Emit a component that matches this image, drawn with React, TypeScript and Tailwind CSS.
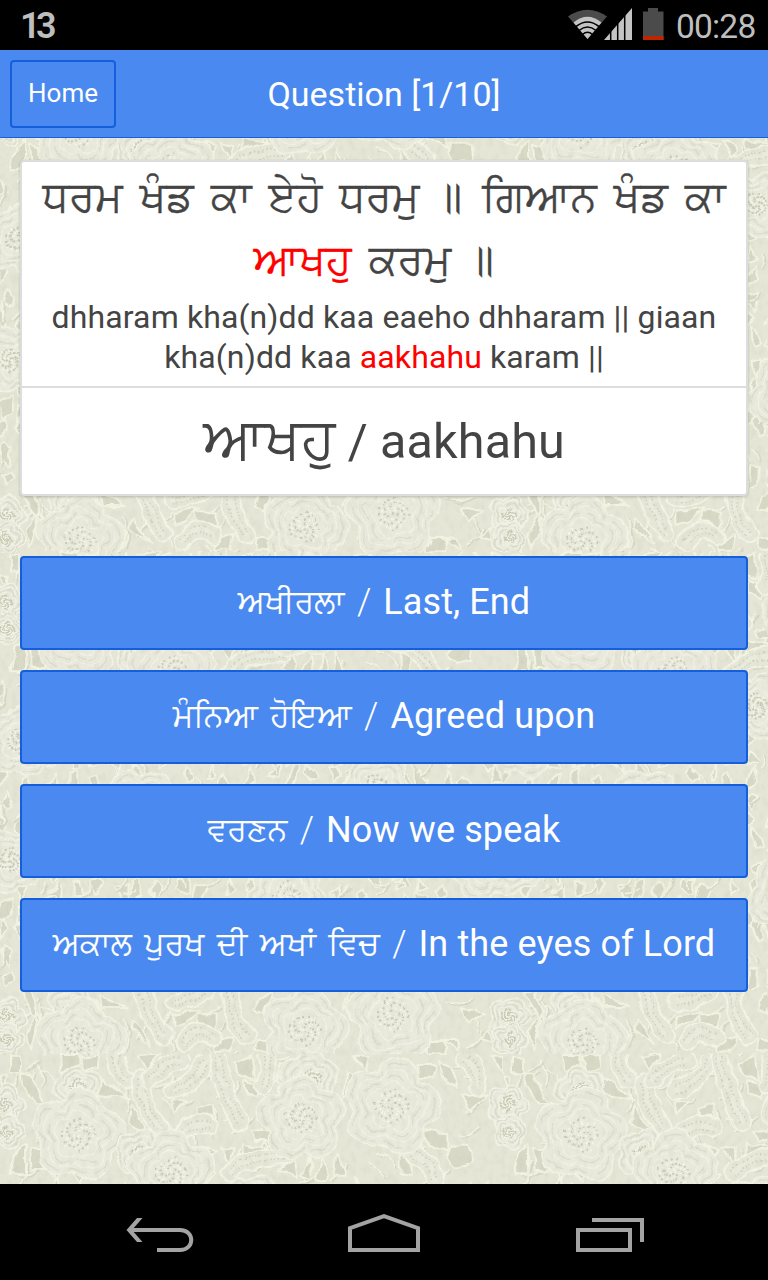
import type { ReactNode } from 'react';

const TILE_W = 503;
const TILE_H = 502;

function random(seed: number) {
  let s = seed;
  return () => {
    s = (s * 16807) % 2147483647;
    return s / 2147483647;
  };
}

function petalPath(r: number, turn: number) {
  let d = '';
  for (let i = 0; i <= 60; i++) {
    const a = (i / 60) * Math.PI * 2;
    const k = r * (0.78 + 0.24 * Math.abs(Math.cos(2.5 * a + turn)));
    d += `${i ? 'L' : 'M'}${(Math.cos(a) * k).toFixed(1)} ${(Math.sin(a) * k).toFixed(1)}`;
  }
  return d + 'Z';
}

function Flower({ x, y, r = 140, turn = 0 }: { x: number; y: number; r?: number; turn?: number }) {
  const dots: ReactNode[] = [];
  for (let i = 0; i < 60; i++) {
    const a = i * 2.4;
    const k = Math.sqrt(i / 60) * r * 0.36;
    dots.push(<circle key={i} cx={Math.cos(a) * k} cy={Math.sin(a) * k} r="3.4" fill={i % 2 ? '#c9cab3' : '#f4f5e8'} />);
  }
  return (
    <g transform={`translate(${x} ${y})`}>
      <path d={petalPath(r, turn)} fill="#e9eadc" stroke="#f1f3e4" strokeWidth="5" />
      {[0.88, 0.76, 0.64, 0.52].map((k, i) => (
        <path
          key={k}
          d={petalPath(r * k, turn + i * 0.12)}
          fill="none"
          stroke={i % 2 ? '#f1f2e6' : '#dbddca'}
          strokeWidth="4"
          strokeDasharray={i % 2 ? undefined : '60 26'}
        />
      ))}
      {dots}
    </g>
  );
}

function Leaf({ d }: { d: string }) {
  return (
    <g fill="none" strokeLinecap="round">
      <path d={d} stroke="#f2f4e5" strokeWidth="58" />
      <path d={d} stroke="#e6e7d7" strokeWidth="46" />
      <path d={d} stroke="#cfd1bb" strokeWidth="24" strokeDasharray="4 8" strokeLinecap="butt" />
      <path d={d} stroke="#e9ebdc" strokeWidth="14" />
    </g>
  );
}

function Holes({ list }: { list: string[] }) {
  return (
    <g strokeLinejoin="round">
      {list.map((p) => (
        <polygon key={p} points={p} fill="#d8d9c6" stroke="#f2f4e3" strokeWidth="6" />
      ))}
    </g>
  );
}

const upperHoles = [
  '300,15 380,52 305,50', '400,90 455,165 390,120', '590,70 650,70 650,115 590,115', '520,75 600,60 560,100 520,110',
  '770,150 830,150 810,185 765,180', '1030,55 1050,0 1130,0', '60,0 90,0 138,115 100,70', '75,130 100,90 115,70 100,150 90,180',
  '330,155 380,130 370,180 335,185', '1100,130 1130,135 1140,160 1100,150', '1382,55 1452,70 1407,100',
  '1277,150 1332,150 1337,190 1282,190', '780,20 820,0 790,70 765,60',
  '1070,70 1110,40 1100,90', '1330,150 1370,150 1380,185', '1440,150 1470,120 1480,160', '640,160 700,140 690,185 640,185',
];

const lowerHoles = [
  '30,200 60,200 60,250 30,250', '65,250 90,255 135,345 110,345 70,280', '285,250 390,325 345,320 300,315',
  '395,345 445,430 385,400', '180,195 235,195 235,240 185,245', '240,200 295,195 290,235 250,240',
  '700,220 755,195 765,270 720,250', '735,270 785,290 770,330 735,315', '840,225 870,235 860,290 835,270',
  '590,355 635,345 640,380 590,380', '515,335 560,330 520,375', '755,425 820,420 810,450 765,450',
  '725,460 800,470 770,500 725,495', '1080,270 1030,320 1040,250', '600,470 650,480 620,515', '590,550 650,550 620,585',
  '50,480 75,460 75,550 35,550', '1252,225 1307,225 1307,260 1257,260', '1317,210 1352,230 1377,300 1332,270',
  '1272,420 1342,430 1342,485 1277,455', '1352,470 1412,470 1417,520 1367,530 1342,500', '1382,320 1462,310 1412,360',
  '1202,490 1232,520 1232,550 1202,555', '320,435 360,430 365,475 320,470', '90,470 120,480 135,540 95,540',
  '150,510 190,530 170,570', '210,540 250,530 240,580', '660,470 700,480 690,520', '840,540 880,500 890,570',
  '900,560 930,500 940,570', '950,570 970,490 985,570', '1000,560 1010,490 1040,560', '1060,200 1110,200 1100,240',
  '1480,200 1509,200 1509,250', '0,260 20,260 15,300', '410,200 480,190 440,240', '1080,400 1120,400 1110,430',
];

const rnd = random(71);
const middleHoles: string[] = [];
for (let row = 0; row < 14; row++) {
  for (let col = 0; col < 23; col++) {
    const x = col * 66 + rnd() * 40;
    const y = 590 + row * 66 + rnd() * 40;
    const pts: string[] = [];
    const n = 3 + Math.floor(rnd() * 3);
    for (let i = 0; i < n; i++) {
      const a = (i / n) * Math.PI * 2 + rnd();
      const r = 14 + rnd() * 24;
      pts.push(`${Math.round(x + Math.cos(a) * r * 0.7)},${Math.round(y + Math.sin(a) * r * 1.2)}`);
    }
    middleHoles.push(pts.join(' '));
  }
}

const middleFlowers = [
  { x: 60, y: 760, r: 110 }, { x: 1480, y: 690, r: 95 }, { x: 760, y: 655, r: 100 }, { x: 1130, y: 900, r: 110 },
  { x: 420, y: 960, r: 120 }, { x: 30, y: 1120, r: 100 }, { x: 1450, y: 1130, r: 110 }, { x: 860, y: 1230, r: 130 },
  { x: 300, y: 1350, r: 110 }, { x: 1180, y: 1420, r: 110 },
];

const threadRnd = random(19);
const threads: string[] = [];
for (let i = 0; i < 260; i++) {
  const x = threadRnd() * 1509;
  const y = 190 + threadRnd() * 1500;
  const a = threadRnd() * Math.PI * 0.8 + 0.6;
  const l = 30 + threadRnd() * 55;
  const dx = Math.cos(a) * l;
  const dy = Math.sin(a) * l;
  threads.push(
    `M${x.toFixed(0)} ${y.toFixed(0)}q${(dx / 2 + dy / 4).toFixed(0)} ${(dy / 2 - dx / 4).toFixed(0)} ${dx.toFixed(0)} ${dy.toFixed(0)}`,
  );
}

function Threads() {
  return (
    <g fill="none">
      <path d={threads.join('')} stroke="#d6d8c5" strokeWidth="5" transform="translate(5 4)" />
      <path d={threads.join('')} stroke="#f1f3e3" strokeWidth="5" />
    </g>
  );
}

function LaceBackground() {
  return (
    <svg className="absolute inset-0 h-full w-full" aria-hidden="true">
      <defs>
        <filter id="grain" x="0" y="0" width="100%" height="100%">
          <feTurbulence type="fractalNoise" baseFrequency="0.16 0.11" numOctaves="3" seed="8" />
          <feColorMatrix values="0 0 0 0 0.5  0 0 0 0 0.5  0 0 0 0 0.38  1.6 0 0 0 -0.7" />
        </filter>
        <filter id="soften" x="0" y="0" width="100%" height="100%">
          <feTurbulence type="fractalNoise" baseFrequency="0.06" numOctaves="2" seed="3" result="w" />
          <feDisplacementMap in="SourceGraphic" in2="w" xChannelSelector="R" yChannelSelector="G" scale="9" result="d" />
          <feGaussianBlur in="d" stdDeviation="0.5" />
        </filter>
        <pattern id="lace" width={TILE_W} height={TILE_H} patternUnits="userSpaceOnUse">
          <rect width={TILE_W} height={TILE_H} fill="#e5e6d6" />
          <g transform="translate(0 -64) scale(.33333)">
            <Holes list={middleHoles} />
            <Threads />
            {middleFlowers.map((f) => (
              <Flower key={f.y} x={f.x} y={f.y} r={f.r} turn={f.x} />
            ))}
            <Holes list={lowerHoles} />
            <Leaf d="M350 190Q340 240 380 270" />
            <Leaf d="M420 270Q430 350 480 415" />
            <Leaf d="M450 270Q490 220 550 210" />
            <Leaf d="M520 300Q590 280 620 210" />
            <Leaf d="M650 200Q670 300 720 400" />
            <Leaf d="M540 430Q570 390 630 410" />
            <Leaf d="M800 200Q810 260 790 290" />
            <Leaf d="M690 550Q730 500 850 500" />
            <Leaf d="M1240 490Q1290 520 1310 570" />
            <Leaf d="M1400 210Q1440 240 1430 290" />
            <Flower x={235} y={300} r={75} turn={1.4} />
            <Flower x={235} y={435} r={140} turn={0.4} />
            <Flower x={930} y={270} r={90} turn={0.7} />
            <Flower x={905} y={385} r={130} turn={1} />
            <Flower x={1175} y={350} r={145} turn={0.2} />
            <Flower x={420} y={490} r={75} turn={0.1} />
            <Flower x={515} y={550} r={130} turn={0.8} />
            <Flower x={15} y={345} r={62} />
            <Flower x={1524} y={345} r={62} />
            <Flower x={20} y={425} r={52} />
            <Flower x={1529} y={425} r={52} />
          </g>
          <svg x="0" y="438" width={TILE_W} height="64">
            <rect width={TILE_W} height="64" fill="#e5e6d6" />
            <g transform="scale(.33333)">
              <g transform="translate(0 -190)">
                <Threads />
              </g>
              <Holes list={upperHoles} />
              <Leaf d="M430 0Q440 70 490 135" />
              <Leaf d="M520 35Q580 30 620 0" />
              <Leaf d="M690 0Q690 80 740 140" />
              <Leaf d="M550 160Q590 100 640 145" />
              <Flower x={220} y={60} r={80} />
              <Flower x={240} y={160} r={135} turn={0.5} />
              <Flower x={915} y={120} r={130} turn={0.2} />
              <Flower x={1180} y={75} r={140} turn={0.9} />
              <Flower x={20} y={80} r={60} />
              <Flower x={1529} y={80} r={65} />
              <Flower x={20} y={150} r={52} />
              <Flower x={1529} y={150} r={52} />
            </g>
          </svg>
        </pattern>
      </defs>
      <g filter="url(#soften)">
        <rect x="-10" y="-10" width="110%" height="110%" fill="#e5e6d6" />
        <g transform="translate(0 -88)">
          <rect width="100%" height="1200" fill="url(#lace)" />
        </g>
      </g>
      <rect width="100%" height="100%" filter="url(#grain)" className="opacity-25" />
    </svg>
  );
}

function StatusBar() {
  return (
    <div className="flex h-[50px] shrink-0 items-center bg-black pl-5 pr-3 text-[#bebebe]">
      <span className="pt-0.5 text-[36px] leading-[50px] font-semibold tracking-[-4.5px]">13</span>
      <svg className="ml-auto h-[50px] w-[100px]" viewBox="0 0 100 50">
        <path d="M0 16.5Q19.500 3 39 16.500L19.500 39Z" fill="#4b4b4b" />
        <path d="M5.500 22.500Q19.500 11 33.500 22.500L19.500 39Z" fill="#c4c4c4" />
        <g fill="none" stroke="#000" strokeWidth="1.600">
          <path d="M8 26.500Q19.500 17.500 31 26.500" />
          <path d="M11 30.500Q19.500 23.500 28 30.500" />
          <path d="M14.500 34.500Q19.500 30 24.500 34.500" />
        </g>
        <path d="M36 40L64 8V40Z" fill="#c4c4c4" />
        <path d="M42.700 20V40M49.700 14V40M56.700 10V40" stroke="#000" strokeWidth="1.500" />
        <path d="M75 11.500H80V8H90V11.500H95.500V40H75Z" fill="#4b4b4b" />
        <path d="M75 36H95.500V40H75Z" fill="#bf2600" />
      </svg>
      <span className="ml-2 w-[80px] pt-[3px] text-[33.5px] leading-[50px] tracking-[-0.8px] whitespace-nowrap">00:28</span>
    </div>
  );
}

function Gurmukhi({ children, className = '' }: { children: ReactNode; className?: string }) {
  return (
    <span lang="pa" className={`font-[FreeSans,Roboto,sans-serif] ${className}`}>
      {children}
    </span>
  );
}

function Danda() {
  return <span className="mr-[3px] [word-spacing:3.6px]"> ॥</span>;
}

const answers = [
  { pa: 'ਅਖੀਰਲਾ', en: 'Last, End' },
  { pa: 'ਮੰਨਿਆ ਹੋਇਆ', en: 'Agreed upon' },
  { pa: 'ਵਰਣਨ', en: 'Now we speak' },
  { pa: 'ਅਕਾਲ ਪੁਰਖ ਦੀ ਅਖਾਂ ਵਿਚ', en: 'In the eyes of Lord' },
];

export default function App() {
  return (
    <div className="flex h-[1280px] w-[768px] flex-col overflow-hidden bg-black font-[Roboto,sans-serif] text-[#444]">
      <StatusBar />
      <header className="grid h-[88px] shrink-0 grid-cols-[1fr_auto_1fr] items-center border-b border-[#1a5fd9] bg-[#4a89f0] px-2.5 text-white">
        <button className="h-[68px] w-[106px] rounded-[4px] border-2 border-[#155fdc] text-[26px]">Home</button>
        <h1 className="text-[34px] leading-[40px]">Question [1/10]</h1>
      </header>
      <main className="relative flex min-h-0 flex-1 flex-col overflow-hidden">
        <LaceBackground />
        <div className="relative flex flex-col px-5 pt-[22px]">
          <section className="h-[336px] rounded-[4px] border-2 border-[#ddd] bg-white text-center shadow-[0_1px_3px_rgba(0,0,0,0.2)]">
            <div className="flex h-[226px] flex-col border-b-2 border-[#ddd]">
              <p className="h-[135px] pt-1 text-[42px] leading-[62px] whitespace-nowrap [word-spacing:6.6px]">
                <Gurmukhi className="[-webkit-text-stroke:0.3px]">
                  ਧਰਮ ਖੰਡ ਕਾ ਏਹੋ ਧਰਮੁ<Danda /> ਗਿਆਨ ਖੰਡ ਕਾ
                  <br />
                  <span className="pr-[18px]">
                    <span className="text-[#f00]">ਆਖਹੁ</span> ਕਰਮੁ<Danda />
                  </span>
                </Gurmukhi>
              </p>
              <p className="text-[32px] leading-[40px] tracking-[0.12px] whitespace-nowrap">
                dhharam kha(n)dd kaa eaeho dhharam || giaan
                <br />
                kha(n)dd kaa <span className="text-[#f00]">aakhahu</span> karam ||
              </p>
            </div>
            <p className="text-[48.5px] leading-[107px] tracking-[0.15px] whitespace-nowrap">
              <Gurmukhi className="text-[56.5px]">ਆਖਹੁ</Gurmukhi> / aakhahu
            </p>
          </section>
          <div className="mt-[60px] flex flex-col gap-5">
            {answers.map((a) => (
              <button
                key={a.en}
                className="h-[94px] rounded-[4px] border-2 border-[#155fdc] bg-[#4a89f0] text-[36px] leading-[88px] tracking-[0.12px] whitespace-nowrap text-white"
              >
                <Gurmukhi className="relative -top-0.5 text-[31.6px] tracking-normal [word-spacing:4.6px] [-webkit-text-stroke:0.15px]">
                  {a.pa}{' '}
                </Gurmukhi>
                <span className="font-light [word-spacing:3px]">/ </span>
                {a.en}
              </button>
            ))}
          </div>
        </div>
      </main>
      <nav className="flex h-24 shrink-0 items-center justify-center bg-black">
        <svg className="h-24 w-full" viewBox="0 0 768 96" fill="none" stroke="#a3a3a3" strokeWidth="4">
          <path d="M131 46H180C195 46 195 66 180 66H157" />
          <path d="M142.500 34H137L126.500 46L137 58H142.500L132 46Z" fill="#a3a3a3" stroke="none" />
          <path d="M350 66V44.200L384 32.100L418 44.200V66Z" />
          <rect x="578" y="46" width="52" height="20" />
          <path d="M592 36H642V58" />
        </svg>
      </nav>
    </div>
  );
}
